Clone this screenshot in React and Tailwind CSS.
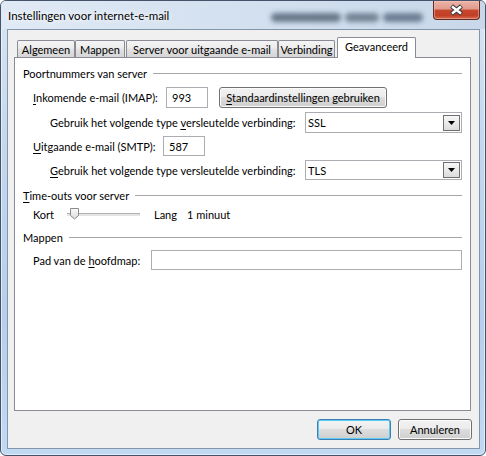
import React from 'react';

const winBtn =
  'flex items-center justify-center rounded-[3px] border border-[#707070] bg-[linear-gradient(180deg,#f2f2f2_0%,#ebebeb_50%,#dddddd_50%,#cfcfcf_100%)] shadow-[inset_0_0_0_1px_#fbfbfb]';

const tabOff =
  'h-[17px] flex items-center justify-center whitespace-nowrap rounded-t-[2px] border border-b-0 border-[#898c95] bg-[linear-gradient(180deg,#f4f4f4_0%,#ececec_45%,#e0e0e0_55%,#d6d6d6_100%)]';

function Key({ children }) {
  return <span className="underline underline-offset-[2px]">{children}</span>;
}

function GroupHead({ children, className = '' }) {
  return (
    <div className={`flex items-center h-[15px] pl-[8px] pr-[8px] ${className}`}>
      <span className="whitespace-nowrap">{children}</span>
      <div className="flex-1 ml-[6px] h-px bg-[#a6a6a6]" />
    </div>
  );
}

function Select({ value }) {
  return (
    <div className="flex-1 h-full border border-[#abadb3] bg-white flex items-center pl-[2px] pr-[1px]">
      <span className="flex-1">{value}</span>
      <div className="w-[17px] h-[16px] border border-[#6f6f6f] bg-[linear-gradient(180deg,#f7f7f7,#dcdcdc)] flex items-center justify-center">
        <svg width="7" height="4" viewBox="0 0 7 4">
          <path d="M0 0H7L3.5 4Z" fill="#000" />
        </svg>
      </div>
    </div>
  );
}

export default function App() {
  return (
    <div className="w-[486px] h-[456px] [font-family:Lato,sans-serif] text-[11px] leading-[15px] text-black">
      <div className="w-full h-full flex flex-col rounded-[6px] border border-[#44536a] bg-[linear-gradient(180deg,#dae6f3_0%,#c4d8ee_30%,#b5cfec_70%,#c1daf4_100%)] shadow-[inset_0_0_0_1px_rgba(255,255,255,0.55)] overflow-hidden">
        {/* title bar */}
        <div className="h-[28px] flex items-start bg-[linear-gradient(90deg,#e0eaf6,#d3e0ef_50%,#c8d8ea)]">
          <div className="w-[270px] pl-[7px] pt-[7px] text-[11.5px] leading-[15px] whitespace-nowrap [text-shadow:0_0_8px_#fff,0_0_4px_#fff]">
            Instellingen voor internet-e-mail
          </div>
          <div className="mt-[12px] w-[152px] h-[9px] flex gap-[4px] blur-[2.5px] opacity-90">
            <div className="w-[70px] h-full rounded-full bg-[#5d6d80]" />
            <div className="w-[34px] h-full rounded-full bg-[#6a7a8c]" />
            <div className="flex-1 h-full rounded-full bg-[#63738a]" />
          </div>
          <div className="ml-auto mr-[5px] w-[47px] h-[19px] rounded-b-[4px] border border-t-0 border-[#612c22] bg-[linear-gradient(180deg,#ebb3a8_0%,#e19a8c_45%,#c9462e_50%,#c23f27_80%,#d66c50_100%)] shadow-[inset_0_0_0_1px_rgba(255,200,190,0.45)] flex items-center justify-center">
            <svg width="15" height="12" viewBox="0 0 15 12">
              <path d="M2.5 2L12.5 10M12.5 2L2.5 10" stroke="#3a3a3a" strokeWidth="4.5" />
              <path d="M3 2.5L12 9.5M12 2.5L3 9.5" stroke="#fff" strokeWidth="2.4" />
            </svg>
          </div>
        </div>

        {/* client area */}
        <div className="flex-1 ml-[6px] mr-[5px] mb-[6px] border border-[#8395a8] bg-[#f0f0f0] flex flex-col">
          <div className="mt-[7px] ml-[6px] mr-[8px] flex flex-col">
            <div className="flex items-end h-[20px]">
              <div className={`${tabOff} ml-[3px] w-[58px]`}>Algemeen</div>
              <div className={`${tabOff} w-[50px]`}>Mappen</div>
              <div className={`${tabOff} ml-[1px] w-[152px]`}>Server voor uitgaande e-mail</div>
              <div className={`${tabOff} w-[57px]`}>Verbinding</div>
              <div className="relative z-10 ml-[2px] w-[79px] h-[21px] -mb-px pb-[4px] flex items-center justify-center rounded-t-[2px] border border-b-0 border-[#898c95] bg-white">
                Geavanceerd
              </div>
            </div>

            <div className="h-[354px] border border-[#898c95] bg-white flex flex-col">
              <GroupHead className="mt-[8px]">Poortnummers van server</GroupHead>

              <div className="mt-[6px] h-[21px] flex items-center pl-[18px]">
                <div className="w-[133px] whitespace-nowrap">
                  <Key>I</Key>nkomende e-mail (IMAP):
                </div>
                <div className="w-[42px] h-full border border-[#abadb3] bg-white flex items-center pl-[5px]">993</div>
                <div className={`${winBtn} ml-[11px] w-[168px] h-full whitespace-nowrap`}>
                  <span>
                    <Key>S</Key>tandaardinstellingen gebruiken
                  </span>
                </div>
              </div>

              <div className="mt-[4px] h-[21px] flex items-center pl-[35px] pr-[8px]">
                <div className="w-[255px] whitespace-nowrap">
                  Gebruik het volgende type <Key>v</Key>ersleutelde verbinding:
                </div>
                <Select value="SSL" />
              </div>

              <div className="mt-[3px] h-[20px] flex items-center pl-[18px]">
                <div className="w-[130px] whitespace-nowrap">
                  <Key>U</Key>itgaande e-mail (SMTP):
                </div>
                <div className="w-[42px] h-full border border-[#abadb3] bg-white flex items-center pl-[5px]">587</div>
              </div>

              <div className="mt-[4px] h-[20px] flex items-center pl-[35px] pr-[8px]">
                <div className="w-[255px] whitespace-nowrap">
                  <Key>G</Key>ebruik het volgende type versleutelde verbinding:
                </div>
                <Select value="TLS" />
              </div>

              <GroupHead className="mt-[8px]">
                <Key>T</Key>ime-outs voor server
              </GroupHead>

              <div className="mt-[4px] h-[14px] flex items-center pl-[18px]">
                <div className="w-[34px]">Kort</div>
                <div className="relative w-[73px] h-[14px] flex items-center">
                  <div className="w-full h-[3px] border-t border-[#b0b0b0] bg-[#e4e4e4]" />
                  <svg className="absolute left-[3px] top-[1px]" width="10" height="12" viewBox="0 0 10 12">
                    <defs>
                      <linearGradient id="th" x1="0" y1="0" x2="0" y2="1">
                        <stop offset="0" stopColor="#fbfbfb" />
                        <stop offset="1" stopColor="#dadada" />
                      </linearGradient>
                    </defs>
                    <path d="M0.5 0.5H8.5V7.5L4.5 11L0.5 7.5Z" fill="url(#th)" stroke="#8a8a8a" />
                  </svg>
                </div>
                <div className="ml-[14px] w-[33px]">Lang</div>
                <div className="whitespace-nowrap">1 minuut</div>
              </div>

              <GroupHead className="mt-[9px]">Mappen</GroupHead>

              <div className="mt-[5px] h-[20px] flex items-center pl-[18px] pr-[8px]">
                <div className="w-[118px] whitespace-nowrap">
                  Pad van de <Key>h</Key>oofdmap:
                </div>
                <div className="flex-1 h-full border border-[#abadb3] bg-white" />
              </div>
            </div>
          </div>

          <div className="mt-[8px] h-[21px] flex justify-end gap-[7px] pr-[7px]">
            <div className="w-[74px] h-full flex items-center justify-center rounded-[3px] border border-[#3c7fb1] bg-[linear-gradient(180deg,#f2f2f2_0%,#ebebeb_50%,#dddddd_50%,#cfcfcf_100%)] shadow-[inset_0_0_0_1px_#5cccf6]">
              OK
            </div>
            <div className={`${winBtn} w-[74px] h-full`}>Annuleren</div>
          </div>
        </div>
      </div>
    </div>
  );
}
